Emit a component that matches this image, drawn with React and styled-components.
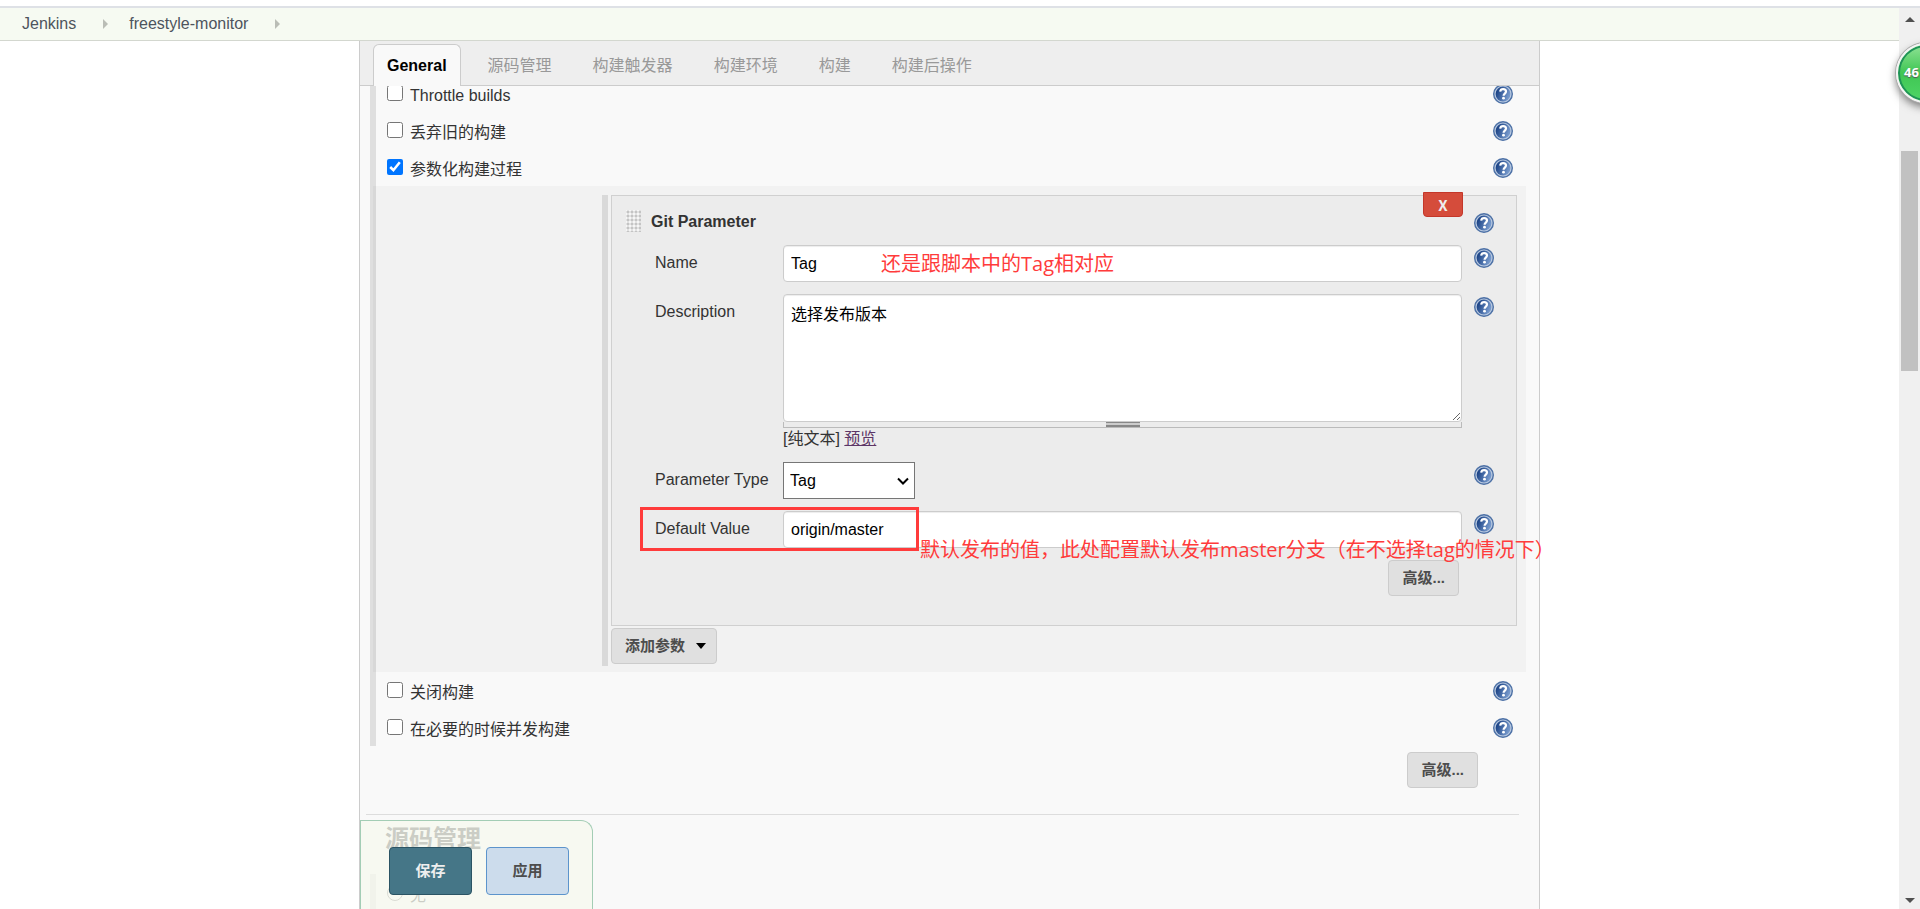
import styled, { createGlobalStyle } from "styled-components";
import { useState } from "react";

const tabs = [
  "General",
  "源码管理",
  "构建触发器",
  "构建环境",
  "构建",
  "构建后操作",
];

const HelpButton = () => (
  <Help type="button" aria-label="help">
    <svg width="20" height="20" viewBox="0 0 20 20">
      <defs>
        <linearGradient id="help" x1="0" y1="0" x2="1" y2="0.4">
          <stop offset="0.1" stopColor="#143c80" />
          <stop offset="1" stopColor="#7598cb" />
        </linearGradient>
      </defs>
      <circle cx="10" cy="10" r="9.3" fill="#b9c9e0" stroke="#4d71a6" strokeWidth="1.4" />
      <circle cx="10" cy="10" r="7.4" fill="url(#help)" />
      <path
        d="M7.2 7.600C7.400 5.900 8.600 5.200 10.100 5.200c1.700 0 2.900.9 2.900 2.400 0 2-2.400 2.100-2.400 4.100"
        fill="none"
        stroke="#fff"
        strokeWidth="2.2"
      />
      <circle cx="10.500" cy="14.200" r="1.400" fill="#fff" />
    </svg>
  </Help>
);

const Option = ({ id, label, defaultChecked }) => (
  <OptionRow>
    <input type="checkbox" id={id} defaultChecked={defaultChecked} />
    <label htmlFor={id}>{label}</label>
    <HelpButton />
  </OptionRow>
);

const App = () => {
  const [active, setActive] = useState("General");

  return (
    <>
      <GlobalStyle />
      <Screen>
        <Main>
          <Breadcrumbs>
            <a href="#jenkins">Jenkins</a>
            <Arrow />
            <a href="#job">freestyle-monitor</a>
            <Arrow />
          </Breadcrumbs>
          <Config>
            <TabBar>
              {tabs.map((tab) => (
                <Tab
                  key={tab}
                  type="button"
                  $active={tab === active}
                  onClick={() => setActive(tab)}
                >
                  {tab}
                </Tab>
              ))}
            </TabBar>
            <Viewport>
              <Section>
                <Option id="throttle" label="Throttle builds" />
                <Option id="discard" label="丢弃旧的构建" />
                <Option id="params" label="参数化构建过程" defaultChecked />
                <Nested>
                  <Parameters>
                    <Card>
                      <CardHead>
                        <Grip />
                        <CardTitle>Git Parameter</CardTitle>
                        <HelpButton />
                        <DeleteButton type="button">X</DeleteButton>
                      </CardHead>
                      <Field>
                        <label htmlFor="name">Name</label>
                        <Anchor>
                          <TextInput id="name" defaultValue="Tag" />
                          <NameNote>还是跟脚本中的Tag相对应</NameNote>
                        </Anchor>
                        <HelpButton />
                      </Field>
                      <Field>
                        <label htmlFor="description">Description</label>
                        <div>
                          <TextArea
                            id="description"
                            defaultValue="选择发布版本"
                          />
                          <Resizer>
                            <span />
                          </Resizer>
                          <Preview>
                            [纯文本] <a href="#preview">预览</a>
                          </Preview>
                        </div>
                        <HelpButton />
                      </Field>
                      <Field>
                        <label htmlFor="type">Parameter Type</label>
                        <SelectBox>
                          <select id="type" defaultValue="Tag">
                            <option>Tag</option>
                            <option>Branch</option>
                            <option>Branch or Tag</option>
                            <option>Revision</option>
                          </select>
                          <svg width="12" height="8" viewBox="0 0 12 8">
                            <path
                              d="M1 1.500l5 5 5-5"
                              fill="none"
                              stroke="#000"
                              strokeWidth="2"
                            />
                          </svg>
                        </SelectBox>
                        <HelpButton />
                      </Field>
                      <Field>
                        <label htmlFor="default">Default Value</label>
                        <TextInput id="default" defaultValue="origin/master" />
                        <HelpButton />
                        <Highlight />
                        <DefaultNote>
                          默认发布的值，此处配置默认发布master分支（在不选择tag的情况下）
                        </DefaultNote>
                      </Field>
                      <CardActions>
                        <Button type="button">高级...</Button>
                      </CardActions>
                    </Card>
                    <Button type="button">
                      添加参数
                      <Caret />
                    </Button>
                  </Parameters>
                </Nested>
                <Option id="disable" label="关闭构建" />
                <Option id="concurrent" label="在必要的时候并发构建" />
              </Section>
              <Actions>
                <Button type="button">高级...</Button>
              </Actions>
              <Divider />
              <Heading>源码管理</Heading>
              <Section>
                <RadioRow>
                  <input type="radio" id="none" name="scm" />
                  <label htmlFor="none">无</label>
                </RadioRow>
              </Section>
            </Viewport>
            <SaveBar>
              <SaveButton type="button" $primary>
                保存
              </SaveButton>
              <SaveButton type="button">应用</SaveButton>
            </SaveBar>
          </Config>
        </Main>
        <Scrollbar>
          <ScrollArrow $up />
          <Thumb />
          <ScrollArrow />
        </Scrollbar>
        <Badge>46</Badge>
      </Screen>
    </>
  );
};
export default App;

const GlobalStyle = createGlobalStyle`
  * {
    box-sizing: border-box;
  }
  body {
    margin: 0;
    overflow: hidden;
    color: #333;
    background: #fff;
    font-size: 16px;
    line-height: 20px;
    font-family: "Liberation Sans", "Noto Sans CJK SC", sans-serif;
  }
  button, input, select, textarea {
    font: inherit;
    margin: 0;
  }
`;

const Screen = styled.div`
  position: relative;
  display: flex;
  height: 100vh;
  padding-top: 6px;
  overflow: hidden;
`;

const Main = styled.div`
  flex: 1;
  min-width: 0;
  display: flex;
  flex-direction: column;
  border-top: 2px solid #dee1e6;
`;

const Breadcrumbs = styled.nav`
  display: flex;
  align-items: center;
  flex-shrink: 0;
  height: 33px;
  padding-left: 22px;
  background: #f6faf2;
  border-bottom: 1px solid #d3d7cf;
  a {
    color: #4d545d;
    text-decoration: none;
  }
`;

const Arrow = styled.span`
  margin: 0 21px 0 27px;
  border: 5px solid transparent;
  border-left-color: #babdb6;
  border-right: 0;
`;

const Config = styled.main`
  position: relative;
  flex: 1;
  min-height: 0;
  width: 100%;
  max-width: 1181px;
  margin: 0 auto;
  display: flex;
  flex-direction: column;
  background: #f9f9f9;
  border: solid #ccc;
  border-width: 0 1px;
`;

/* stays above the scrolled form */
const TabBar = styled.div`
  position: relative;
  z-index: 1;
  display: flex;
  align-items: flex-end;
  flex-shrink: 0;
  gap: 13px;
  height: 45px;
  padding-left: 13px;
  background: #eee;
  border-bottom: 1px solid #ccc;
`;

const Tab = styled.button`
  height: 42px;
  margin-bottom: -1px;
  padding: 0 13px;
  border: 1px solid ${(props) => (props.$active ? "#ccc" : "transparent")};
  border-bottom: 0;
  border-radius: 6px 6px 0 0;
  background: ${(props) => (props.$active ? "#f9f9f9" : "transparent")};
  color: ${(props) => (props.$active ? "#000" : "#999")};
  font-weight: ${(props) => (props.$active ? "bold" : "normal")};
`;

/* scrolled a little, so the first option is cut by the tab bar */
const Viewport = styled.div`
  flex: 1;
  min-height: 0;
  display: flex;
  flex-direction: column;
  padding: 0 13px 0 6px;
  > * {
    flex-shrink: 0;
  }
  > :first-child {
    margin-top: -11px;
  }
`;

const Section = styled.section`
  margin-left: 4px;
  border-left: 6px solid #dfdfdf;
`;

const OptionRow = styled.div`
  display: flex;
  align-items: flex-start;
  height: 37px;
  padding: 9px 13px 0 11px;
  input {
    width: 16px;
    height: 16px;
    margin-top: 1px;
  }
  label {
    flex: 1;
    padding: 2px 0 0 7px;
  }
`;

const RadioRow = styled(OptionRow)`
  padding-top: 10px;
`;

const Help = styled.button`
  display: block;
  flex-shrink: 0;
  width: 20px;
  height: 20px;
  padding: 0;
  border: 0;
  border-radius: 50%;
  background: none;
  svg {
    display: block;
  }
`;

const Nested = styled.div`
  margin-left: -3px;
  padding: 9px 9px 6px 229px;
  background: rgba(0, 0, 0, 0.027);
`;

const Parameters = styled.div`
  padding-left: 3px;
  border-left: 6px solid #d9d9d9;
  padding-bottom: 2px;
`;

const Card = styled.div`
  margin-bottom: 2px;
  padding: 14px 22px 29px 14px;
  background: #ececec;
  border: 1px solid #d0d0d0;
`;

const CardHead = styled.div`
  position: relative;
  display: flex;
  height: 35px;
  > ${Help} {
    margin-top: 3px;
  }
`;

const Grip = styled.div`
  width: 15px;
  height: 22px;
  background-color: #f6f6f6;
  background-image: radial-gradient(circle at 2px 2px, #c4c4c4 1px, #f6f6f6 2px);
  background-size: 4px 4px;
`;

const CardTitle = styled.b`
  flex: 1;
  padding: 2px 0 0 10px;
`;

const DeleteButton = styled.button`
  position: absolute;
  top: -18px;
  right: 31px;
  width: 40px;
  height: 25px;
  padding: 0;
  border: 1px solid #c4372a;
  border-radius: 0 0 4px 4px;
  background: #d54c3b;
  color: #eee;
  font-family: "Noto Sans CJK SC", sans-serif;
  font-size: 15px;
  font-weight: bold;
`;

const Field = styled.div`
  position: relative;
  display: grid;
  grid-template-columns: 128px 1fr 20px;
  column-gap: 12px;
  margin: 0 0 12px 29px;
  > label {
    padding-top: 8px;
    margin-right: -12px;
  }
  > :nth-child(2) {
    margin-left: -12px;
  }
  > ${Help} {
    margin-top: 3px;
  }
`;

const Anchor = styled.div`
  position: relative;
`;

const TextInput = styled.input`
  display: block;
  width: 100%;
  height: 37px;
  padding: 0 7px;
  border: 1px solid #ccc;
  border-radius: 4px;
  box-shadow: inset 0 1px 1px rgba(0, 0, 0, 0.075);
  ${Field} > & {
    width: calc(100% + 12px);
  }
`;

const TextArea = styled.textarea`
  display: block;
  width: 100%;
  height: 128px;
  padding: 10px 7px;
  border: 1px solid #ccc;
  border-radius: 4px;
  box-shadow: inset 0 1px 1px rgba(0, 0, 0, 0.075);
`;

const Resizer = styled.div`
  display: flex;
  justify-content: center;
  height: 6px;
  border: 1px solid #bbb;
  border-top: 0;
  span {
    width: 34px;
    height: 5px;
    border: solid #888;
    border-width: 1px 0 2px;
    background: #ccc;
  }
`;

const Preview = styled.div`
  height: 22px;
  line-height: 22px;
  a {
    color: #5c3566;
  }
`;

const SelectBox = styled.div`
  position: relative;
  width: 132px;
  select {
    width: 100%;
    height: 37px;
    padding: 0 6px;
    appearance: none;
    border: 1px solid #767676;
    border-radius: 0;
    background: #fff;
  }
  svg {
    position: absolute;
    top: 15px;
    right: 6px;
    pointer-events: none;
  }
`;

const Note = styled.span`
  position: absolute;
  white-space: nowrap;
  color: #ff3b3b;
  font-size: 20px;
  line-height: 28px;
  font-family: "Open Sans", "Noto Sans CJK SC", sans-serif;
  pointer-events: none;
`;

const NameNote = styled(Note)`
  top: 5px;
  left: 98px;
`;

const DefaultNote = styled(Note)`
  top: 25px;
  left: 265px;
`;

const Highlight = styled.div`
  position: absolute;
  top: -4px;
  left: -15px;
  width: 279px;
  height: 44px;
  border: 3px solid #ff3b3b;
  pointer-events: none;
`;

const CardActions = styled.div`
  display: flex;
  justify-content: flex-end;
  padding-right: 35px;
`;

const Button = styled.button`
  display: flex;
  align-items: center;
  height: 36px;
  padding: 0 13px;
  border: 1px solid #ccc;
  border-radius: 4px;
  background: #e0e0e0;
  color: #4d4d4d;
  font-size: 15px;
  font-weight: bold;
`;

const Caret = styled.span`
  margin: 0 -3px 0 11px;
  border: 5px solid transparent;
  border-top: 6px solid #000;
  border-bottom: 0;
`;

const Actions = styled.div`
  display: flex;
  justify-content: flex-end;
  padding: 6px 48px 26px 0;
`;

const Divider = styled.hr`
  width: calc(100% - 7px);
  margin: 0;
  border: 0;
  border-top: 1px solid #ddd;
`;

const Heading = styled.h2`
  margin: 0;
  padding: 8px 19px 19px;
  font-size: 24px;
  line-height: 32px;
`;

const SaveBar = styled.div`
  position: absolute;
  left: 0;
  bottom: 0;
  display: flex;
  gap: 14px;
  padding: 26px 23px 14px 28px;
  border: 1px solid #a3cdb5;
  border-bottom: 0;
  border-radius: 0 12px 0 0;
  background: rgba(246, 248, 238, 0.78);
`;

const SaveButton = styled.button`
  width: 83px;
  height: 48px;
  border: 1px solid ${(props) => (props.$primary ? "#2b5464" : "#5c94cc")};
  border-radius: 4px;
  background: ${(props) => (props.$primary ? "#457687" : "#ccdcec")};
  color: ${(props) => (props.$primary ? "#eee" : "#4d4d4d")};
  font-size: 15px;
  font-weight: bold;
`;

const Scrollbar = styled.div`
  display: flex;
  flex-direction: column;
  align-items: center;
  width: 21px;
  padding: 9px 0 6px;
  background: #f0f0f0;
  border-top: 2px solid #dee1e6;
`;

const ScrollArrow = styled.span`
  border: 5px solid transparent;
  border-top: ${(props) => (props.$up ? "0" : "5px solid #505050")};
  border-bottom: ${(props) => (props.$up ? "5px solid #505050" : "0")};
`;

const Thumb = styled.div`
  width: 17px;
  height: 220px;
  margin: 129px 0 auto;
  background: #c1c1c1;
`;

const Badge = styled.div`
  position: absolute;
  top: 43px;
  right: -36px;
  width: 60px;
  height: 60px;
  padding-left: 6px;
  border: 2px solid #f4f4f4;
  border-radius: 50%;
  background: linear-gradient(#8fe295, #3fc653 50%, #4fd566);
  box-shadow: inset 0 0 0 2px #1f9357, 0 0 0 1px #aaa, 0 4px 9px #777;
  color: #fff;
  font: bold 13px/54px "Open Sans", sans-serif;
  text-shadow: 0 1px 1px #555;
`;
